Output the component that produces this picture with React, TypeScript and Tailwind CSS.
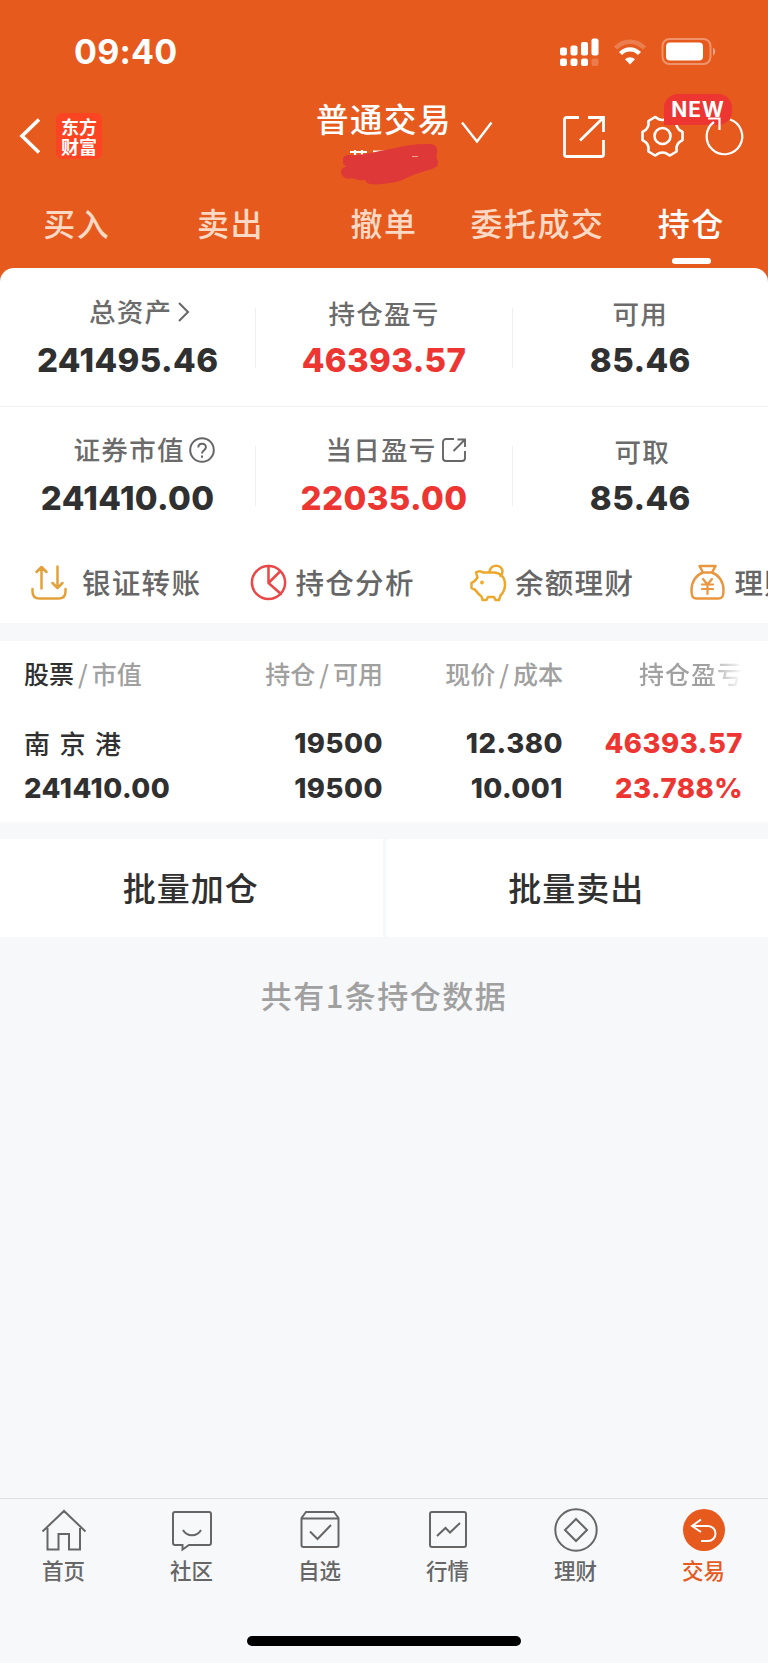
import type { ReactNode } from "react";

const tabs = ["买入", "卖出", "撤单", "委托成交", "持仓"];

const StatusBar = () => (
  <div className="flex h-[103px] items-center justify-between pl-[74px] pr-[51px]">
    <div className="font-[Inter] text-[34px] font-bold leading-none tracking-[0.200px]">09:40</div>
    <div className="flex items-center">
      <svg width="40" height="28" viewBox="0 0 40 28" fill="#fff">
        <rect x="1" y="9.500" width="7" height="8" rx="2" />
        <rect x="11.500" y="7.500" width="7" height="10" rx="2" />
        <rect x="22" y="4" width="7" height="13.500" rx="2" />
        <rect x="32.500" y="0.500" width="7" height="17" rx="2" />
        <rect x="1" y="20.500" width="7" height="7.500" rx="2" />
        <rect x="11.500" y="20.500" width="7" height="7.500" rx="2" />
        <rect x="22" y="20.500" width="7" height="7.500" rx="2" />
        <rect x="32.500" y="20.500" width="7" height="7.500" rx="2" fillOpacity="0.2" />
      </svg>
      <svg className="ml-[14px]" width="34" height="26" viewBox="0 0 34 26" fill="none">
        <path d="M2.500 9C10.500 0.500 23.500 0.500 31.500 9" stroke="#fff" strokeOpacity="0.22" strokeWidth="4.500" />
        <path d="M7.500 14.500C13 9 21 9 26.500 14.500" stroke="#fff" strokeWidth="4.300" />
        <path d="M17 25.500l-5-5.300c3-2.700 7-2.700 10 0z" fill="#fff" />
      </svg>
      <svg className="ml-[14px]" width="56" height="27" viewBox="0 0 56 27">
        <rect x="1.500" y="1" width="48" height="25" rx="7" fill="none" stroke="#fff" strokeOpacity="0.35" strokeWidth="2" />
        <rect x="5" y="4.500" width="37" height="18" rx="4" fill="#fff" />
        <path d="M52 9.500c3 1.500 3 6.500 0 8z" fill="#fff" fillOpacity="0.45" />
      </svg>
    </div>
  </div>
);

const TitleBar = () => (
  <div className="relative h-[83px]">
    <svg className="absolute left-[19px] top-[15px]" width="22" height="36" fill="none" stroke="#fff" strokeWidth="3.600">
      <path d="M20 1.500L3 18l17 16.500" />
    </svg>
    <div className="absolute left-[56px] top-[10px] flex h-[46px] w-[46px] flex-col items-center justify-center rounded-[6px] bg-[#fb4421] text-[18px] font-bold leading-[20px]">
      <span>东方</span>
      <span>财富</span>
    </div>
    <div className="flex h-[31px] items-center justify-center text-[32.500px] font-medium tracking-[1.500px]">
      <span>普通交易</span>
    </div>
    <svg className="absolute left-[460px] top-[18px]" width="34" height="24" fill="none" stroke="#fff" strokeWidth="2.400">
      <path d="M2 1.500l15 19L31.500 1.500" />
    </svg>
    <svg className="absolute left-[340px] top-[40px]" width="100" height="46" fill="none">
      <path d="M10 9h17M15 7v5M22 7v5M33 8.500h13" stroke="#fff" strokeWidth="2.200" />
      <path
        d="M8 12C22 13 38 8 53 5.500 66 2 78 .5 90 1c6 .5 8 4 7 11-2 4 2 5 1 8-1 4-2 4-6 6-7 2-13 4-19 6-8 4-15 7-23 8-7 1-13 2-20 1-3-1-4-2-5-4-6 1-10-1-13-2-5 2-10-1-11-5 0-4 2-6 6-6.500C3 22 3 20 3 18c0-4 2-6 5-6z"
        fill="#de3838"
      />
      <path d="M72 13.500h6" stroke="#f0a08c" />
    </svg>
    <svg className="absolute left-[562px] top-[12px]" width="44" height="44" fill="none" stroke="#fff" strokeWidth="2.800">
      <path d="M17 2.500H4.500a2 2 0 0 0-2 2v35a2 2 0 0 0 2 2h35a2 2 0 0 0 2-2V25" />
      <path d="M26 2.500h15.500V17M41 3L18 25.500" />
    </svg>
    <svg className="absolute left-[640px] top-[10px]" width="46" height="46" viewBox="0 0 46 46" fill="none" stroke="#fff" strokeWidth="2.600" strokeLinejoin="round">
      <path d="M15 4C17 4 17 7 22.500 7S28 4 30 4l6.500 4c.5 2-1 3.500 1 6.500 2 4 4 3 5 4.500v8c-1 1.500-3 1-5 4.500-2 3.500-.5 5-1 7L30 42.500c-2 0-2-3-7.500-3s-5.500 3-7.500 3L8.500 38.500c-.5-2 1-3.500-1-7-2-3.500-4-3-5-4.500v-8c1-1.500 3-.5 5-4.500 2-3 .5-4.500 1-6.500z" />
      <circle cx="22.500" cy="23" r="8" />
    </svg>
    <div className="absolute left-[664px] top-[-9px] flex h-[31px] w-[68px] items-center justify-center rounded-[14px] rounded-bl-none bg-[#ed3532] font-[Inter] text-[21px] font-bold tracking-[1px]">
      NEW
    </div>
    <svg className="absolute left-[704px] top-[13px]" width="42" height="42" fill="none" stroke="#fff" strokeWidth="2.200">
      <path d="M26 3.500A17.800 17.800 0 1 1 10 6" />
      <path d="M4 2.500h11.500V14" />
    </svg>
  </div>
);

type StatProps = {
  label: string;
  value: string;
  red?: boolean;
  icon?: ReactNode;
  className: string;
};

const Stat = ({ label, value, red, icon, className }: StatProps) => (
  <div className="flex flex-1 flex-col items-center">
    <div className={`flex h-[30px] items-center gap-[4px] text-[26.500px] font-medium tracking-[1.300px] text-[#6b6b6b] ${className}`}>
      {label}
      {icon}
    </div>
    <div className={`mt-[15px] font-[Inter] text-[33px] font-extrabold leading-[34px] tracking-[0.400px] ${red ? "text-[#ed3532]" : "text-[#303030]"}`}>
      {value}
    </div>
  </div>
);

const Divider = () => <div className="mt-[10px] h-[60px] w-px bg-[#efefef]" />;

const chevron = (
  <svg className="ml-[2px] mt-[2px]" width="12" height="22" fill="none" stroke="#666" strokeWidth="2">
    <path d="M1 2l9 9-9 9" />
  </svg>
);

const question = (
  <svg className="mt-[2px]" width="26" height="26" fill="none" stroke="#666" strokeWidth="2">
    <circle cx="13" cy="13" r="11.800" />
    <path d="M9.300 10.500c0-5 7.600-5 7.600-.3 0 3-3.900 3-3.900 6.300M13 18.500v2.200" />
  </svg>
);

const openBox = (
  <svg className="mt-[2px]" width="26" height="26" fill="none" stroke="#666" strokeWidth="1.900">
    <path d="M13 2H5a3 3 0 0 0-3 3v16a3 3 0 0 0 3 3h16a3 3 0 0 0 3-3v-7M16.500 2.500H24V10M24 2.500L12.500 14" />
  </svg>
);

const actions = [
  {
    label: "银证转账",
    gap: "gap-[14px]",
    icon: (
      <g stroke="#e3a13c">
        <path d="M2.500 25v2.500c0 5 3 7 7 7h19c4 0 7-2 7-7V25" />
        <path d="M11.500 24.500V3M6.500 8L11.500 3l5 5M27.500 2.500v21M22.500 19l5 5 5-5" />
      </g>
    ),
  },
  {
    label: "持仓分析",
    gap: "gap-[8px]",
    icon: (
      <g stroke="#ea4848">
        <circle cx="18.500" cy="18.500" r="16.600" />
        <path d="M18.500 2v17L30 7.500M18.500 19L31 30" />
      </g>
    ),
  },
  {
    label: "余额理财",
    gap: "gap-[8px]",
    icon: (
      <g stroke="#eda82c">
        <path d="M7 8.500l1.500 5C7 16 5 18 2.500 19v5c3 1 4 1.500 5.500 4 1.500 2.500 3 3.500 4.500 4.500l1 3.500h4l1.500-3h6l1.500 3h3.500l1.500-4.500C34 29 36 25 36 20.500 36 13 31 8.500 25 8.500H14c-2-1.500-5-1.500-7 0z" />
        <path d="M20.500 8C21.500-.5 33 0 33.500 7.500c0 2-1 3.500-2 4.500" />
        <circle cx="13" cy="18.500" r="0.700" fill="#eda82c" />
      </g>
    ),
  },
  {
    label: "理财",
    gap: "gap-[8px]",
    icon: (
      <g stroke="#e9963f">
        <path d="M10.500 2h16L23 8.500h-9zM14 8.500C7 11 2.500 18 2.500 26c0 6 1 8.500 5 8.500h22c4 0 5-2.500 5-8.500 0-8-4.500-15-11.500-17.500" />
        <path d="M14 15l4.500 5.500L23 15M18.500 20.500V30M13 20.500h11M13 25h11" strokeWidth="2.200" />
      </g>
    ),
  },
];

const navItems = [
  {
    label: "首页",
    icon: <path d="M1.500 23.500L23 3l21.500 20.500M6.500 20v21.500h11V26h10.500v15.500h11V20" />,
  },
  {
    label: "社区",
    icon: <path d="M6 4h34a2 2 0 0 1 2 2v29a2 2 0 0 1-2 2H20l-6.500 4.500V37H6a2 2 0 0 1-2-2V6a2 2 0 0 1 2-2zM14 22c4 7 14 7 18 0" />,
  },
  {
    label: "自选",
    icon: <path d="M9 4h28l4.500 6v27a2 2 0 0 1-2 2h-33a2 2 0 0 1-2-2V10zM4.500 10.500h37M13 23.500l7.500 7.500L34 17" />,
  },
  {
    label: "行情",
    icon: <path d="M7 4h32a2 2 0 0 1 2 2v31a2 2 0 0 1-2 2H7a2 2 0 0 1-2-2V6a2 2 0 0 1 2-2zM12 28l8.500-8 4.500 4.500L35 15" />,
  },
  {
    label: "理财",
    icon: (
      <>
        <circle cx="23" cy="22" r="20.700" />
        <path d="M23 11l11 11-11 11-11-11z" />
      </>
    ),
  },
  {
    label: "交易",
    active: true,
    icon: (
      <>
        <circle cx="23" cy="22" r="21" fill="#e65a1e" stroke="none" />
        <path d="M20 11.500L11 18l9 6M11 18h16c4.500 0 7.500 3.500 7.500 7.500S31.500 33 27 33h-7" stroke="#fff" />
      </>
    ),
  },
];

export default function App() {
  return (
    <div className="flex h-[1663px] w-[768px] flex-col overflow-hidden bg-[#f7f8fa] font-['Noto_Sans_CJK_SC',sans-serif]">
      <div className="bg-[#e65a1e] text-white">
        <StatusBar />
        <TitleBar />
        <div className="grid h-[82px] grid-cols-5">
          {tabs.map((tab) => (
            <div
              key={tab}
              className={`flex flex-col items-center whitespace-nowrap pt-[12px] text-[32px] font-medium leading-[48px] tracking-[1.500px] ${tab === "持仓" ? "text-white" : "text-[#fbd9c4]"}`}
            >
              {tab}
              {tab === "持仓" && <div className="mt-[12px] h-[6px] w-[39px] rounded-full bg-white" />}
            </div>
          ))}
        </div>
        <div className="h-[355px] rounded-t-[14px] bg-white">
          <div className="flex h-[139px] border-b border-[#efefef] pt-[30px]">
            <Stat label="总资产" value="241495.46" icon={chevron} className="pl-[24px] pb-[4px]" />
            <Divider />
            <Stat label="持仓盈亏" value="46393.57" red className="" />
            <Divider />
            <Stat label="可用" value="85.46" className="" />
          </div>
          <div className="flex h-[138px] pt-[29px]">
            <Stat label="证券市值" value="241410.00" icon={question} className="pl-[33px] pb-[4px]" />
            <Divider />
            <Stat label="当日盈亏" value="22035.00" red icon={openBox} className="pl-[24px] pb-[4px]" />
            <Divider />
            <Stat label="可取" value="85.46" className="pl-[4px]" />
          </div>
          <div className="flex h-[78px] overflow-hidden pl-[30px] pt-[18px]">
            {actions.map((action) => (
              <div key={action.label} className={`flex h-[40px] w-[219.500px] shrink-0 items-center ${action.gap}`}>
                <svg width="38" height="38" fill="none" strokeWidth="2.500" strokeLinecap="round" strokeLinejoin="round">
                  {action.icon}
                </svg>
                <span className="whitespace-nowrap pb-[2px] text-[28.500px] font-medium tracking-[1.300px] text-[#666]">{action.label}</span>
              </div>
            ))}
          </div>
        </div>
      </div>

      <div className="mt-[18px] h-[181px] bg-white pl-[24px] pr-[25px] pt-[14px]">
        <div className="grid h-9 grid-cols-[179px_180px_180px_180px] items-center text-[25px] font-medium text-[#a0a0a0]">
          <div>
            <span className="text-[#303030]">股票</span>
            <span className="px-[4px]">/</span>市值
          </div>
          <div className="text-right">
            持仓<span className="px-[4px]">/</span>可用
          </div>
          <div className="text-right">
            现价<span className="px-[4px]">/</span>成本
          </div>
          <div className="bg-linear-to-r from-[#a0a0a0] from-80% to-white bg-clip-text text-right tracking-[1px] text-transparent">持仓盈亏</div>
        </div>
        <div className="mt-[30px] grid grid-cols-[179px_180px_180px_180px] text-right font-[Inter] text-[27.500px] font-extrabold leading-[45px] tracking-[0.500px] text-[#303030]">
          <div className="-mt-px text-left font-['Noto_Sans_CJK_SC',sans-serif] text-[26px] font-medium tracking-[9.500px]">南京港</div>
          <div>19500</div>
          <div>12.380</div>
          <div className="text-[#ed3532]">46393.57</div>
          <div className="text-left">241410.00</div>
          <div>19500</div>
          <div>10.001</div>
          <div className="text-[#ed3532]">23.788%</div>
        </div>
      </div>

      <div className="mt-[17px] flex h-[98px] gap-[3px] text-[33px] font-medium tracking-[1px] text-[#303030]">
        <div className="flex flex-1 items-center justify-center bg-white pr-[1px]">批量加仓</div>
        <div className="flex flex-1 items-center justify-center bg-white pr-[1px]">批量卖出</div>
      </div>

      <div className="mt-[35px] text-center text-[31px] font-medium leading-[46px] tracking-[1.500px] text-[#a0a0a0]">共有1条持仓数据</div>

      <div className="mt-auto h-[165px] border-t border-[#dfe0e2]">
        <div className="grid grid-cols-6 pt-[9px]">
          {navItems.map((item) => (
            <div key={item.label} className={`flex flex-col items-center ${item.active ? "text-[#e65a1e]" : "text-[#666]"}`}>
              <svg width="46" height="46" fill="none" stroke="currentColor" strokeWidth="2">
                {item.icon}
              </svg>
              <span className="mt-[2px] pr-[1px] text-[21.500px] font-medium leading-[28px]">{item.label}</span>
            </div>
          ))}
        </div>
        <div className="mx-auto mt-[52px] h-[10px] w-[274px] rounded-full bg-black" />
      </div>
    </div>
  );
}
